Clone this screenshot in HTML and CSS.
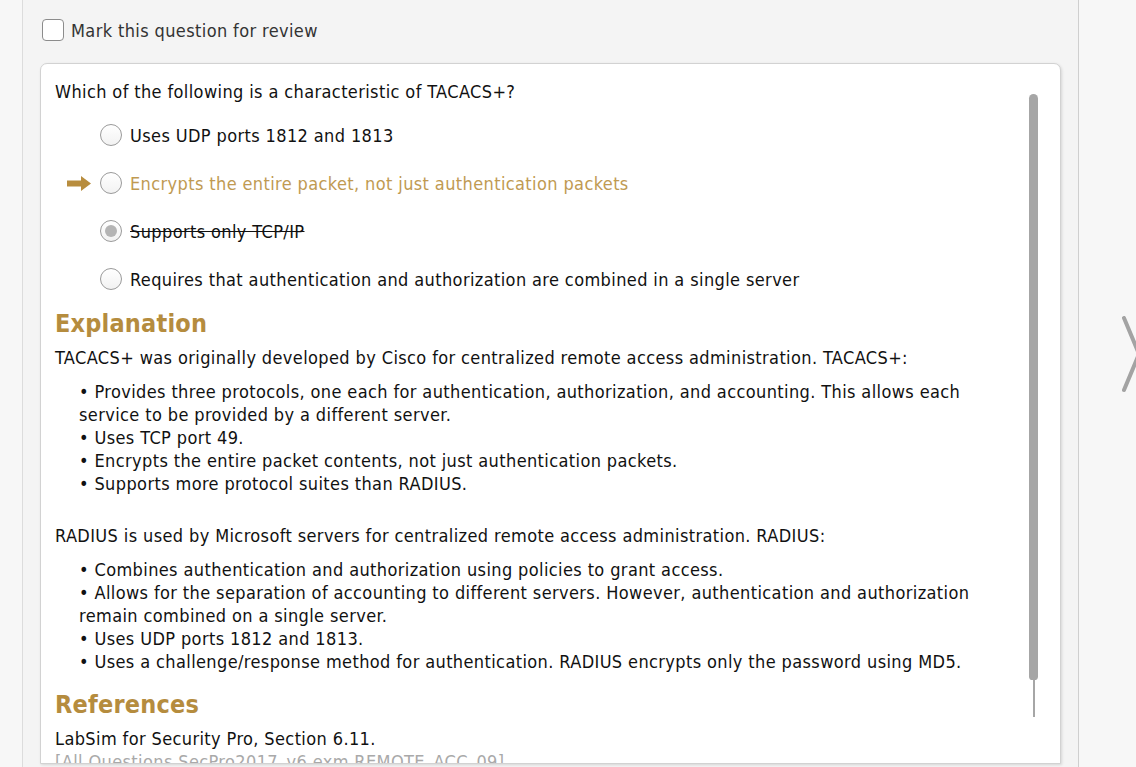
FILE: index.html
```html
<!DOCTYPE html>
<html lang="en">
<head>
<meta charset="utf-8">
<title>Question Review</title>
<link rel="stylesheet" href="styles.css">
</head>
<body>
<div class="page">
  <div class="panel">
    <label class="review">
      <span class="checkbox"></span>
      <span class="review-label">Mark this question for review</span>
    </label>
    <div class="card">
      <div class="content">
        <div class="question">Which of the following is a characteristic of TACACS+?</div>
        <div class="options">
          <div class="option">
            <span class="marker"></span>
            <span class="radio"></span>
            <span class="opt-text">Uses UDP ports 1812 and 1813</span>
          </div>
          <div class="option correct">
            <span class="marker">
              <svg width="24" height="15" viewBox="0 0 24 15"><path d="M0 4.5 H14 V0 L24 7.5 L14 15 V10.5 H0 Z" fill="#b88d3e"/></svg>
            </span>
            <span class="radio"></span>
            <span class="opt-text">Encrypts the entire packet, not just authentication packets</span>
          </div>
          <div class="option wrong">
            <span class="marker"></span>
            <span class="radio checked"></span>
            <span class="opt-text">Supports only TCP/IP</span>
          </div>
          <div class="option">
            <span class="marker"></span>
            <span class="radio"></span>
            <span class="opt-text">Requires that authentication and authorization are combined in a single server</span>
          </div>
        </div>

        <h2 class="heading">Explanation</h2>
        <p class="para">TACACS+ was originally developed by Cisco for centralized remote access administration. TACACS+:</p>
        <ul class="bullets">
          <li>&bull; Provides three protocols, one each for authentication, authorization, and accounting. This allows each<br>service to be provided by a different server.</li>
          <li>&bull; Uses TCP port 49.</li>
          <li>&bull; Encrypts the entire packet contents, not just authentication packets.</li>
          <li>&bull; Supports more protocol suites than RADIUS.</li>
        </ul>
        <p class="para second">RADIUS is used by Microsoft servers for centralized remote access administration. RADIUS:</p>
        <ul class="bullets">
          <li>&bull; Combines authentication and authorization using policies to grant access.</li>
          <li>&bull; Allows for the separation of accounting to different servers. However, authentication and authorization<br>remain combined on a single server.</li>
          <li>&bull; Uses UDP ports 1812 and 1813.</li>
          <li>&bull; Uses a challenge/response method for authentication. RADIUS encrypts only the password using MD5.</li>
        </ul>

        <h2 class="heading refs">References</h2>
        <p class="para">LabSim for Security Pro, Section 6.11.</p>
        <p class="source">[All Questions SecPro2017_v6.exm REMOTE_ACC_09]</p>
      </div>
      <div class="scrollbar">
        <div class="thumb"></div>
        <div class="track"></div>
      </div>
    </div>
  </div>
  <svg class="next" width="20" height="80" viewBox="0 0 20 80"><path d="M2 2 L17 38 L2 74" fill="none" stroke="#a3a3a3" stroke-width="4" stroke-linecap="round" stroke-linejoin="round"/></svg>
</div>
</body>
</html>
```

FILE: styles.css
```css
html, body {
  margin: 0;
  padding: 0;
  height: 100%;
  overflow: hidden;
}

body {
  background: #f7f7f7;
  font-family: "DejaVu Sans Condensed", "DejaVu Sans", sans-serif;
  font-size: 18px;
  line-height: 23px;
  letter-spacing: 0.38px;
  color: #111;
}

.page {
  position: relative;
  height: 767px;
  padding-left: 22px;
}

.panel {
  width: 1057px;
  height: 767px;
  background: #f4f4f4;
  border-left: 1px solid #dcdcdc;
  border-right: 1px solid #cfcfcf;
  padding-left: 17px;
  box-sizing: border-box;
  padding-top: 19px;
}

.review {
  display: flex;
  align-items: center;
  gap: 7px;
  height: 22px;
  margin-left: 2px;
  color: #333;
}

.checkbox {
  width: 20px;
  height: 20px;
  border: 1px solid #8c8c8c;
  border-radius: 4px;
  background: #fff;
  flex: none;
}

.card {
  position: relative;
  margin-top: 22px;
  width: 1021px;
  height: 701px;
  box-sizing: border-box;
  background: #fff;
  border: 1px solid #d2d2d2;
  border-radius: 7px 7px 0 0;
  box-shadow: 1px 1px 3px rgba(0, 0, 0, 0.12);
  overflow: hidden;
}

.content {
  padding: 16px 0 0 14px;
}

.question {
  height: 23px;
}

.options {
  margin-top: 8px;
}

.option {
  display: flex;
  align-items: center;
  height: 48px;
}

.marker {
  width: 45px;
  flex: none;
  display: flex;
  align-items: center;
  padding-left: 12px;
  box-sizing: border-box;
}

.marker svg {
  display: block;
}

.radio {
  width: 20px;
  height: 20px;
  border: 1px solid #9a9a9a;
  border-radius: 50%;
  background: linear-gradient(#ffffff, #f2f2f2);
  flex: none;
  margin-right: 8px;
  display: flex;
  align-items: center;
  justify-content: center;
}

.radio.checked::after {
  content: "";
  width: 12px;
  height: 12px;
  border-radius: 50%;
  background: #b4b4b4;
}

.correct .opt-text {
  color: #c09a52;
}

.wrong .opt-text {
  text-decoration: line-through;
}

.heading {
  margin: 6px 0 0;
  font-size: 25px;
  line-height: 30px;
  font-weight: bold;
  letter-spacing: 0.2px;
  color: #b58c3e;
}

.heading.refs {
  margin-top: 17px;
}

.para {
  margin: 7px 0 0;
}

.para.second {
  margin-top: 29px;
}

.bullets {
  list-style: none;
  margin: 11px 0 0;
  padding: 0 0 0 24px;
}

.source {
  margin: 0;
  color: #a9a9a9;
}

.scrollbar {
  position: absolute;
  left: 988px;
  top: 30px;
  width: 9px;
  display: flex;
  flex-direction: column;
  align-items: center;
}

.thumb {
  width: 9px;
  height: 586px;
  background: #a6a6a6;
  border-radius: 5px 5px 4px 4px;
}

.track {
  width: 2px;
  height: 37px;
  background: #a6a6a6;
}

.next {
  position: absolute;
  left: 1122px;
  top: 316px;
}
```
